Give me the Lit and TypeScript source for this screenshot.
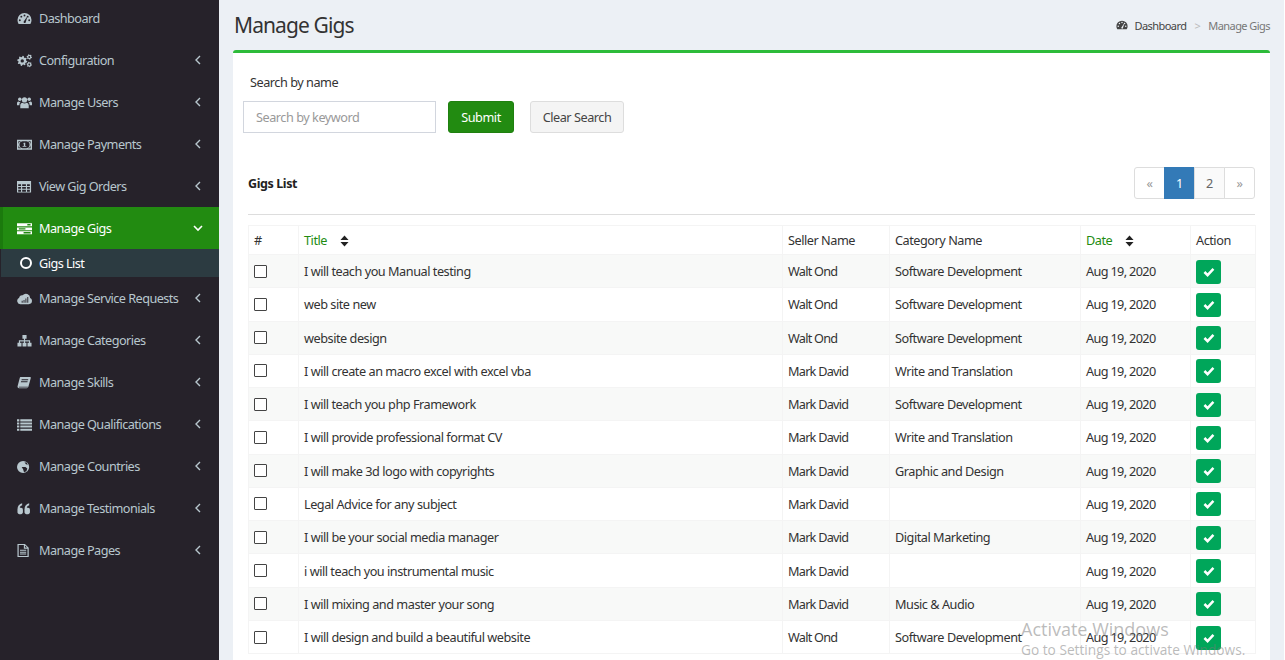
import { LitElement, html, css, svg } from 'lit';
import { customElement } from 'lit/decorators.js';

const hole = (x: number, y: number, r: number) =>
  `M${x - r} ${y}a${r} ${r} 0 1 0 ${2 * r} 0a${r} ${r} 0 1 0 ${-2 * r} 0z`;

// toothed wheel, used for the cogs icon
const gear = (x: number, y: number, r: number, teeth: number, inner: number) => {
  const pts: string[] = [];
  const n = teeth * 4;
  for (let i = 0; i < n; i++) {
    const a = ((i + 0.5) / n) * Math.PI * 2;
    const rr = i % 4 < 2 ? r : r * 0.76;
    pts.push(`${(x + rr * Math.cos(a)).toFixed(2)} ${(y + rr * Math.sin(a)).toFixed(2)}`);
  }
  return `M${pts.join('L')}z${hole(x, y, inner)}`;
};

const ICONS: Record<string, unknown> = {
  dashboard: svg`<path fill-rule="evenodd" d="M8 2.200a7.500 7.500 0 0 0-7.500 7.500c0 1.500.4 2.900 1.200 4.100h12.600a7.500 7.500 0 0 0 1.200-4.100A7.500 7.500 0 0 0 8 2.200z${hole(3, 9.8, 1)}${hole(4.6, 6, 1)}${hole(8, 4.8, 1)}${hole(11.4, 6, 1)}${hole(13, 9.8, 1)}M7 11.500a1.200 1.200 0 0 0 2.200.8l1.600-5.500-.5-.1z"/>`,
  cogs: svg`<path fill-rule="evenodd" d=${gear(5.6, 8.4, 5.4, 8, 1.8) + gear(13.1, 4.2, 2.9, 6, 1) + gear(13.1, 12.3, 2.9, 6, 1)}/>`,
  users: svg`<circle cx="8" cy="5.300" r="2.800"/><circle cx="3" cy="4.500" r="1.900"/><circle cx="13" cy="4.500" r="1.900"/>
    <path d="M3.500 14v-3c0-1.700 1.200-2.700 2.300-2.700.6.500 1.400.8 2.200.8s1.600-.3 2.200-.8c1.100 0 2.300 1 2.300 2.700v3z"/>
    <path d="M0 11V8.700C0 7.400.8 6.800 1.700 6.800c.4.400 1 .6 1.600.6.200 0 .5 0 .7-.1-.5.600-1.500 1.300-1.500 3.700z"/>
    <path d="M16 11V8.700c0-1.300-.8-1.900-1.700-1.900-.4.400-1 .6-1.600.6-.2 0-.5 0-.7-.1.500.600 1.500 1.300 1.500 3.700z"/>`,
  money: svg`<path fill-rule="evenodd" d="M0 3h16v10.500H0zM1.500 4.500v7.500h3.200a3.800 3.800 0 0 1 0-7.500zM11.300 4.500a3.800 3.800 0 0 1 0 7.500h3.200V4.500zM5.800 4.500a3.800 3.800 0 0 0 0 7.500h4.400a3.800 3.800 0 0 0 0-7.500zM7.300 6h1.500v3.500H10v1H6v-1h1.300V7.300L6.500 7.800z"/>`,
  table: svg`<path fill-rule="evenodd" d="M0 2h15v12.500H0zM1.300 5.500v2h3v-2zM5.500 5.500v2h4v-2zM10.700 5.500v2h3v-2zM1.300 8.500v2h3v-2zM5.500 8.500v2h4v-2zM10.700 8.500v2h3v-2zM1.300 11.500v2h3v-2zM5.500 11.500v2h4v-2zM10.700 11.500v2h3v-2z"/>`,
  tasks: svg`<path fill-rule="evenodd" d="M0 2.500h16v3H0zM11 3.300v1.400h3.500V3.300zM0 6.800h16v3H0zM2 7.600v1.400h7V7.600zM0 11h16v3H0zM7 11.800v1.400h7.500v-1.400z"/>`,
  cloud: svg`<path fill-rule="evenodd" d="M3.500 14A3.500 3.500 0 0 1 2.300 7.300 3 3 0 0 1 6 4.600 4.500 4.500 0 0 1 14 7.500a3.300 3.300 0 0 1 2 3 3.500 3.500 0 0 1-3.500 3.500zM5 10.500v2h1v-2zM7 9.500v3h1v-3zM9 8v4.500h1V8zM11 6.500v6h1v-6z"/>`,
  sitemap: svg`<path d="M5.800 2h4.400v4H8.600v1.800H14V10.500h1.500V14.500h-4.300V10.500h1.600V9H8.600v1.500h1.500V14.500H5.900V10.500h1.500V9H3.200v1.500h1.600V14.500H.5V10.500H2V7.800h5.400V6H5.800z"/>`,
  book: svg`<path fill-rule="evenodd" d="M3.500 2h10.800l.5.8-2.600 9.500c-.2.900-.8 1.700-2 1.700H2.200C1 14 .4 13 .6 12L3 3zM5 4.500l-.2 1h7l.2-1zM4.300 6.700l-.2 1h7l.2-1z"/><path fill="var(--hole, #26222a)" d="M2.200 12.500h9.500l-.3.800H2.200a.4.4 0 0 1 0-.8z"/>`,
  list: svg`<path d="M0 2.500h2.500v2.200H0zM3.500 2.500H16v2.200H3.500zM0 5.800h2.500V8H0zM3.500 5.800H16V8H3.500zM0 9.100h2.500v2.200H0zM3.500 9.100H16v2.200H3.500zM0 12.400h2.500v2.200H0zM3.500 12.400H16v2.200H3.500z"/>`,
  globe: svg`<path fill-rule="evenodd" d="M6.500 2a6.500 6.500 0 1 1 0 13 6.500 6.500 0 0 1 0-13zM5 8.500l1.500 2.500 1 3 2.500-1 1-3-2-1.500zM8 3.500l1.500 2 2 .5-1-2z"/>`,
  quote: svg`<path d="M.5 9c0-3.500 2-5.800 5-6.500v2C4 5 3 6 3 7.200h1.300c1 0 2 .8 2 2V12c0 1-1 2-2 2H2.500c-1 0-2-1-2-2zM8 9c0-3.500 2-5.800 5-6.500v2c-1.500.5-2.500 1.500-2.500 2.700h1.300c1 0 2 .8 2 2V12c0 1-1 2-2 2H10c-1 0-2-1-2-2z"/>`,
  file: svg`<path fill-rule="evenodd" d="M.5 1H8.500L12.500 5V15H.5zM1.800 2.200v11.600h9.400V6H7.300V2.200zM8.500 2.700V4.800h2.200zM3.200 7.300h6.600v1H3.200zM3.200 9.300h6.600v1H3.200zM3.200 11.300h6.600v1H3.200z"/>`,
};

const icon = (name: string) => html`<svg class="ico" viewBox="0 0 16 16" fill="currentColor">${ICONS[name]}</svg>`;

const MENU_TOP = [
  ['dashboard', 'Dashboard', false],
  ['cogs', 'Configuration', true],
  ['users', 'Manage Users', true],
  ['money', 'Manage Payments', true],
  ['table', 'View Gig Orders', true],
] as const;

const MENU_BOTTOM = [
  ['cloud', 'Manage Service Requests'],
  ['sitemap', 'Manage Categories'],
  ['book', 'Manage Skills'],
  ['list', 'Manage Qualifications'],
  ['globe', 'Manage Countries'],
  ['quote', 'Manage Testimonials'],
  ['file', 'Manage Pages'],
] as const;

const SD = 'Software Development';
const WT = 'Write and Translation';
const ROWS = [
  ['I will teach you Manual testing', 'Walt Ond', SD],
  ['web site new', 'Walt Ond', SD],
  ['website design', 'Walt Ond', SD],
  ['I will create an macro excel with excel vba', 'Mark David', WT],
  ['I will teach you php Framework', 'Mark David', SD],
  ['I will provide professional format CV', 'Mark David', WT],
  ['I will make 3d logo with copyrights', 'Mark David', 'Graphic and Design'],
  ['Legal Advice for any subject', 'Mark David', ''],
  ['I will be your social media manager', 'Mark David', 'Digital Marketing'],
  ['i will teach you instrumental music', 'Mark David', ''],
  ['I will mixing and master your song', 'Mark David', 'Music & Audio'],
  ['I will design and build a beautiful website', 'Walt Ond', SD],
];

const sortIcon = html`<svg class="sort" viewBox="0 0 10 12" fill="currentColor"><path d="M5 0l4.500 4.800H.5zM5 12L.5 7.200h9z"/></svg>`;
const angle = html`<svg class="angle" viewBox="0 0 8 10" fill="none" stroke="currentColor" stroke-width="1.400"><path d="M6 1L2 5l4 4"/></svg>`;
const angleDown = html`<svg class="angle down" viewBox="0 0 10 8" fill="none" stroke="currentColor" stroke-width="1.600"><path d="M1 2l4 4 4-4"/></svg>`;
const check = html`<svg class="check" viewBox="0 0 14 12" fill="none" stroke="currentColor" stroke-width="3"><path d="M1.500 6l3.800 3.800 7-7.500"/></svg>`;

@customElement('app-root')
export class AppRoot extends LitElement {
  static styles = css`
    :host {
      display: block;
      height: 660px;
      overflow: hidden;
      position: relative;
      font-family: 'Noto Sans', 'Open Sans', sans-serif;
      font-size: 12.7px;
      letter-spacing: -0.47px;
      color: #333;
      background: #fff;
    }
    * { box-sizing: border-box; }
    .layout { display: flex; height: 660px; width: 1284px; background: #ecf0f5; }
    .sidebar {
      flex: 0 0 219px;
      background: #26222a;
      color: #b8c7ce;
      overflow: hidden;
      letter-spacing: -0.55px;
      --hole: #26222a;
    }
    .menu { margin-top: -3px; }
    .item {
      height: 42px;
      display: flex;
      align-items: center;
      padding: 0 17px;
      gap: 7px;
    }
    .item .ico { width: 15px; height: 15px; flex: none; }
    .item .label { flex: 1; white-space: nowrap; }
    .angle { width: 8px; height: 10px; flex: none; }
    .angle.down { width: 10px; height: 8px; margin-right: -1px; color: #fff; }
    .item.active {
      background: #228b11;
      color: #fff;
      border-left: 3px solid #1b7a0d;
      padding-left: 14px;
      --hole: #228b11;
    }
    .sub {
      height: 28px;
      margin-left: 1px;
      background: #2c3b41;
      color: #fff;
      display: flex;
      align-items: center;
      padding-left: 19px;
      gap: 7px;
    }
    .ring { width: 12px; height: 12px; border: 2px solid #fff; border-radius: 50%; }
    .main { flex: 1; min-width: 0; padding: 0 14px 0 14px; }
    .head {
      height: 50px;
      display: flex;
      align-items: center;
      justify-content: space-between;
    }
    h1 { margin: 0 0 0 1px; font-size: 21px; font-weight: 400; color: #333; letter-spacing: -0.9px; }
    .crumb { display: flex; align-items: center; font-size: 11px; letter-spacing: -0.55px; color: #444; }
    .crumb .ico { width: 12px; height: 12px; margin-right: 6px; --hole: #ecf0f5; }
    .crumb .sep { color: #bbb; margin: 0 8px; }
    .crumb .now { color: #777; }
    .box {
      background: #fff;
      border-top: 3px solid #2dbb3a;
      border-radius: 3px 3px 0 0;
      padding: 0 15px 0 10px;
      height: 620px;
    }
    .search-label { margin: 20px 0 0 7px; height: 19px; line-height: 19px; color: #333; }
    .search { display: flex; margin-top: 9px; }
    .input {
      width: 193px;
      height: 32px;
      border: 1px solid #d2d6de;
      padding: 0 12px;
      font: inherit;
      letter-spacing: inherit;
      color: #333;
      outline: none;
    }
    .input::placeholder { color: #999; opacity: 1; }
    .btn {
      height: 32px;
      border-radius: 3px;
      font: inherit;
      letter-spacing: inherit;
      padding: 0;
    }
    .submit { width: 66px; margin-left: 12px; background: #228b11; border: 1px solid #1f800f; color: #fff; }
    .clear { width: 94px; margin-left: 16px; background: #f4f4f4; border: 1px solid #ddd; color: #444; }
    .list-head {
      margin: 34px 0 0 5px;
      height: 48px;
      padding-bottom: 15px;
      display: flex;
      align-items: center;
      justify-content: space-between;
      border-bottom: 1px solid #ddd;
    }
    .list-head b { font-weight: 700; color: #222; font-size: 12.5px; letter-spacing: -0.4px; }
    .pager { display: flex; height: 32px; }
    .pager span {
      width: 31px;
      display: flex;
      align-items: center;
      justify-content: center;
      border: 1px solid #ddd;
      margin-left: -1px;
      color: #666;
      background: #fafafa;
    }
    .pager span:first-child { background: #fff; border-radius: 3px 0 0 3px; color: #999; margin-left: 0; }
    .pager span:last-child { background: #fff; border-radius: 0 3px 3px 0; color: #999; }
    .pager span.on { background: #337ab7; border-color: #337ab7; color: #fff; }
    table {
      margin: 10px 0 0 5px;
      width: 1007px;
      table-layout: fixed;
      border-collapse: collapse;
    }
    th, td {
      border: 1px solid #f4f4f4;
      padding: 0 5px;
      text-align: left;
      font-weight: 400;
      white-space: nowrap;
      overflow: hidden;
      height: 33.27px;
      color: #333;
    }
    th { height: 29px; }
    td.date { letter-spacing: -0.65px; }
    td.seller { letter-spacing: -0.75px; }
    tbody tr:nth-child(odd) td { background: #f8f9f8; }
    th.link { color: #228b11; }
    .sort { width: 9px; height: 12px; margin-left: 10px; color: #222; vertical-align: -2px; }
    .cb { display: block; width: 13px; height: 13px; border: 1px solid #444; background: #fff; border-radius: 1px; }
    .ok {
      width: 25px;
      height: 24px;
      margin-top: 1px;
      background: #00a65a;
      border-radius: 3px;
      color: #fff;
      display: flex;
      align-items: center;
      justify-content: center;
    }
    .check { width: 12px; height: 10px; }
    .watermark {
      position: absolute;
      left: 1021px;
      top: 617px;
      color: rgba(120, 120, 120, 0.5);
      font-family: 'Open Sans', sans-serif;
      letter-spacing: 0;
      white-space: nowrap;
      pointer-events: none;
    }
    .watermark .a { font-size: 18px; line-height: 24px; }
    .watermark .b { font-size: 13.7px; line-height: 18px; }
  `;

  render() {
    return html`
      <div class="layout">
        <aside class="sidebar">
          <div class="menu">
            ${MENU_TOP.map(([ic, label, more]) => html`
              <div class="item">${icon(ic)}<span class="label">${label}</span>${more ? angle : ''}</div>`)}
            <div class="item active">${icon('tasks')}<span class="label">Manage Gigs</span>${angleDown}</div>
            <div class="sub"><span class="ring"></span><span>Gigs List</span></div>
            ${MENU_BOTTOM.map(([ic, label]) => html`
              <div class="item">${icon(ic)}<span class="label">${label}</span>${angle}</div>`)}
          </div>
        </aside>
        <main class="main">
          <div class="head">
            <h1>Manage Gigs</h1>
            <div class="crumb">${icon('dashboard')}<span>Dashboard</span><span class="sep">&gt;</span><span class="now">Manage Gigs</span></div>
          </div>
          <section class="box">
            <div class="search-label">Search by name</div>
            <div class="search">
              <input class="input" placeholder="Search by keyword" />
              <button class="btn submit">Submit</button>
              <button class="btn clear">Clear Search</button>
            </div>
            <div class="list-head">
              <b>Gigs List</b>
              <div class="pager"><span>«</span><span class="on">1</span><span>2</span><span>»</span></div>
            </div>
            <table>
              <colgroup>
                <col style="width:50px" /><col style="width:484px" /><col style="width:107px" />
                <col style="width:191px" /><col style="width:110px" /><col style="width:65px" />
              </colgroup>
              <thead>
                <tr>
                  <th>#</th>
                  <th class="link">Title ${sortIcon}</th>
                  <th>Seller Name</th>
                  <th>Category Name</th>
                  <th class="link">Date ${sortIcon}</th>
                  <th>Action</th>
                </tr>
              </thead>
              <tbody>
                ${ROWS.map(([title, seller, cat]) => html`
                  <tr>
                    <td><span class="cb"></span></td>
                    <td>${title}</td>
                    <td class="seller">${seller}</td>
                    <td>${cat}</td>
                    <td class="date">Aug 19, 2020</td>
                    <td><div class="ok">${check}</div></td>
                  </tr>`)}
              </tbody>
            </table>
          </section>
        </main>
      </div>
      <div class="watermark">
        <div class="a">Activate Windows</div>
        <div class="b">Go to Settings to activate Windows.</div>
      </div>
    `;
  }
}
